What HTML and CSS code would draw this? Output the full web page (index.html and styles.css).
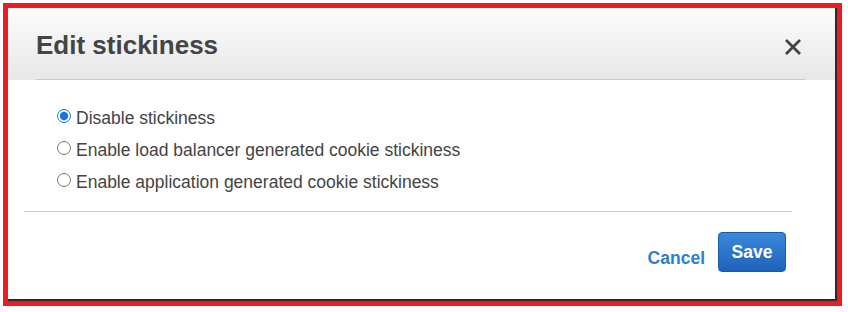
FILE: index.html
```html
<!DOCTYPE html>
<html>
<head>
<meta charset="utf-8">
<link rel="stylesheet" href="styles.css">
</head>
<body>
<div class="frame">
  <div class="dialog">
    <div class="header">
      <div class="header-row">
        <h1 class="title">Edit stickiness</h1>
        <button class="close" aria-label="Close">
          <svg width="18" height="18" viewBox="0 0 18 18"><path d="M2 2 L16 16 M16 2 L2 16" stroke="#444" stroke-width="2.8" stroke-linecap="butt" fill="none"/></svg>
        </button>
      </div>
    </div>
    <div class="body">
      <label class="option"><input type="radio" name="s" checked><span>Disable stickiness</span></label>
      <label class="option"><input type="radio" name="s"><span>Enable load balancer generated cookie stickiness</span></label>
      <label class="option"><input type="radio" name="s"><span>Enable application generated cookie stickiness</span></label>
    </div>
    <div class="divider"></div>
    <div class="footer">
      <a class="cancel" href="#">Cancel</a>
      <button class="save">Save</button>
    </div>
  </div>
</div>
</body>
</html>
```

FILE: styles.css
```css
html, body {
  margin: 0;
  padding: 0;
  background: #ffffff;
}
body {
  padding: 3px;
  font-family: "Liberation Sans", Arial, sans-serif;
}
.frame {
  width: 829px;
  height: 293px;
  border: 5px solid #ec1c24;
}
.dialog {
  width: 827px;
  height: 291px;
  background: #ffffff;
  border-right: 2px solid #2a2a2a;
  border-bottom: 2px solid #2a2a2a;
}
.header {
  background: linear-gradient(#fcfcfc, #e7e7e7);
  padding: 0 30px 0 28px;
}
.header-row {
  display: flex;
  justify-content: space-between;
  align-items: flex-start;
  height: 72px;
  box-sizing: border-box;
  border-bottom: 1px solid #c9c9c9;
}
.title {
  margin: 22px 0 0 0;
  font-size: 26px;
  line-height: 30px;
  font-weight: bold;
  color: #444444;
}
.close {
  margin: 30px 3px 0 0;
  padding: 0;
  border: 0;
  background: transparent;
  width: 18px;
  height: 18px;
  display: block;
}
.close svg { display: block; }
.body {
  padding: 22px 0 0 49px;
  display: flex;
  flex-direction: column;
}
.option {
  display: flex;
  align-items: center;
  height: 32px;
  font-size: 17.5px;
  line-height: 32px;
  color: #444444;
}
.option input {
  margin: 0 5px 0 0;
  width: 14px;
  height: 14px;
  accent-color: #1a73e8;
  position: relative;
  top: -2px;
}
.divider {
  margin: 13px 43px 0 16px;
  height: 1px;
  background: #cccccc;
}
.footer {
  display: flex;
  justify-content: flex-end;
  align-items: flex-start;
  padding: 20px 49px 0 0;
}
.cancel {
  margin-top: 16px;
  font-size: 17.5px;
  line-height: 20px;
  font-weight: bold;
  color: #2d7dd2;
  text-decoration: none;
  margin-right: 13px;
}
.save {
  height: 40px;
  width: 68px;
  box-sizing: border-box;
  border: 1px solid #1a5aa6;
  border-radius: 4px;
  background: linear-gradient(#3a89dc, #1e63b9);
  color: #ffffff;
  font-family: "Liberation Sans", Arial, sans-serif;
  font-size: 17.5px;
  line-height: 20px;
  font-weight: bold;
  padding: 0 0 1px 0;
}
```
